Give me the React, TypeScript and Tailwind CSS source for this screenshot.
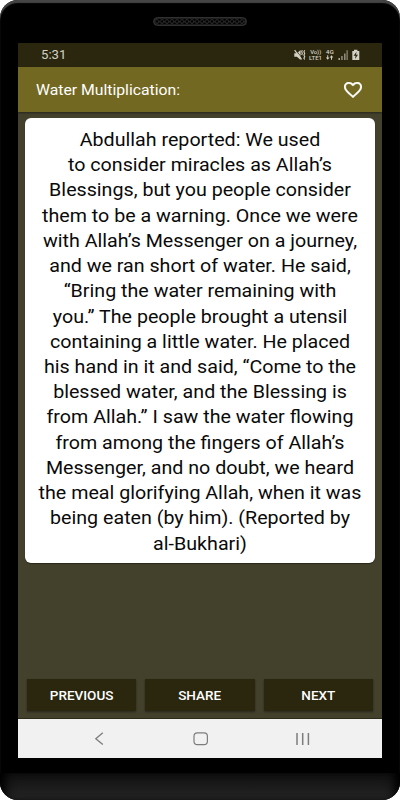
const LINES = [
  "Abdullah reported: We used",
  "to consider miracles as Allah’s",
  "Blessings, but you people consider",
  "them to be a warning. Once we were",
  "with Allah’s Messenger on a journey,",
  "and we ran short of water. He said,",
  "“Bring the water remaining with",
  "you.” The people brought a utensil",
  "containing a little water. He placed",
  "his hand in it and said, “Come to the",
  "blessed water, and the Blessing is",
  "from Allah.” I saw the water flowing",
  "from among the fingers of Allah’s",
  "Messenger, and no doubt, we heard",
  "the meal glorifying Allah, when it was",
  "being eaten (by him). (Reported by",
  "al-Bukhari)",
];

const ACTIONS = ["PREVIOUS", "SHARE", "NEXT"];

function Speaker() {
  return (
    <svg width="94" height="9" viewBox="0 0 94 9">
      <defs>
        <pattern id="mesh" width="5" height="4" patternUnits="userSpaceOnUse">
          <circle cx="1.5" cy="2.6" r="1.2" fill="#000" />
          <circle cx="4" cy="4.4" r="1.2" fill="#000" />
          <circle cx="4" cy="0.4" r="1.2" fill="#000" />
        </pattern>
      </defs>
      <rect x="0.5" y="0.5" width="93" height="8" rx="4" fill="#242424" />
      <rect x="2" y="1.5" width="90" height="6" rx="3" fill="url(#mesh)" />
      <rect x="0.5" y="0.5" width="93" height="8" rx="4" fill="none" stroke="#303030" />
    </svg>
  );
}

function StatusIcons() {
  return (
    <svg
      width="66"
      height="12"
      viewBox="0 0 66 12"
      fill="#d3d1c5"
      fontFamily="Roboto, sans-serif"
      fontWeight="500"
    >
      {/* muted speaker with vibration */}
      <path d="M0.3 4.2h2.6L6.6 1v10L2.9 7.8H0.3z" />
      <path d="M1.8 1l6.6 8.6" stroke="#2b260e" strokeWidth="0.8" />
      <path d="M0.6 1.2l7 9.2" stroke="#d3d1c5" strokeWidth="1.2" />
      <path
        d="M8.3 1.2l-.6 1.6.6 1.6-.6 1.6M10.7 1.2l-.8 1.6.8 1.6-.8 1.6.8 1.6-.8 1.6.8 1.4"
        fill="none"
        stroke="#d3d1c5"
        strokeWidth="1.1"
      />
      <text x="16.2" y="5.2" fontSize="6" textLength="11" lengthAdjust="spacingAndGlyphs">Vo))</text>
      <text x="15" y="11" fontSize="6.2" textLength="13" lengthAdjust="spacingAndGlyphs">LTE1</text>
      <text x="31.8" y="5.2" fontSize="6.2" textLength="8" lengthAdjust="spacingAndGlyphs">4G</text>
      <path d="M33.2 6.2h1v2.4h1.3l-1.8 2.2-1.8-2.2h1.3zM37 10.8h1V8.4h1.3l-1.8-2.2-1.8 2.2H37z" />
      {/* signal */}
      <path d="M44.5 9h1.4v2h-1.4zM47.4 7h1.1v4h-1.1zM50.3 4.4h1.1v6.6h-1.1z" fill="#b9b6a8" />
      <path d="M52.6 1.2h1v9.8h-1z" fill="#a5a290" />
      {/* battery */}
      <path d="M60 0.8h3.4v1.2h1.9V11h-7V2H60z" />
      <path d="M62.6 2.8l-3 4h2l-.6 3.2 3-4.2h-2z" fill="#2b260e" />
    </svg>
  );
}

function HeartIcon() {
  return (
    <svg
      width="18"
      height="16"
      viewBox="2 3 20 18.35"
      preserveAspectRatio="none"
      fill="#fff"
      stroke="#fff"
      strokeWidth="0.3"
    >
      <path d="M16.5 3c-1.74 0-3.41.81-4.5 2.09C10.91 3.81 9.24 3 7.5 3 4.42 3 2 5.42 2 8.5c0 3.78 3.4 6.86 8.55 11.54L12 21.35l1.45-1.32C18.6 15.36 22 12.28 22 8.5 22 5.42 19.58 3 16.5 3zm-4.4 15.55l-.1.1-.1-.1C7.14 14.24 4 11.39 4 8.5 4 6.5 5.5 5 7.5 5c1.54 0 3.04.99 3.57 2.36h1.87C13.46 5.99 14.96 5 16.5 5c2 0 3.5 1.5 3.5 3.5 0 2.89-3.14 5.74-7.9 10.05z" />
    </svg>
  );
}

function NavBar() {
  return (
    <div className="flex h-[39px] justify-center bg-[#f1f1f1] pt-[12px]">
      <svg width="220" height="15" viewBox="0 0 220 15" fill="none" stroke="#7d7d7d">
        <path d="M12.8 1.8L5.8 7.7l7 5.9" strokeWidth="1.3" />
        <rect x="104" y="1.8" width="13.4" height="11.8" rx="3.4" strokeWidth="1.2" />
        <path d="M207 2v12M212.7 2v12M218.4 2v12" strokeWidth="1.5" />
      </svg>
    </div>
  );
}

export default function App() {
  return (
    <div className="h-[800px] w-[400px] bg-white font-['Roboto',sans-serif]">
      <div className="flex h-full flex-col overflow-hidden rounded-[18px] bg-black shadow-[inset_0_3px_1px_#454545]">
        <div className="flex h-[43px] shrink-0 justify-center pt-[17px]">
          <Speaker />
        </div>

        {/* Screen */}
        <div className="mx-[18px] flex h-[715px] shrink-0 flex-col bg-[#43402c]">
          <div className="flex h-[24px] shrink-0 items-center justify-between bg-[#2b260e] pr-[22px] pl-[23px]">
            <span className="origin-left scale-x-[1.1] text-[12px] text-[#d3d1c5]">5:31</span>
            <StatusIcons />
          </div>
          <header className="flex h-[45px] shrink-0 items-center justify-between bg-[#736821] pr-[20px] pl-[18px] shadow-[0_1px_2px_rgba(0,0,0,0.4)]">
            <h1 className="origin-left scale-x-[1.125] pt-[2px] text-[14px] text-white">
              Water Multiplication:
            </h1>
            <HeartIcon />
          </header>

          <main className="mx-[7px] mt-[6px] h-[444.5px] shrink-0 rounded-[6px] bg-white pt-[9px] text-center shadow-[0_1px_1px_rgba(0,0,0,0.4)]">
            {LINES.map((line) => (
              <p
                key={line}
                className="h-[25.23px] scale-x-[1.092] text-[18px] leading-[25.23px] whitespace-nowrap text-[#0a0a0a]"
              >
                {line}
              </p>
            ))}
          </main>

          <div className="mt-auto flex gap-[9px] border-b border-[#2d2a17] px-[9px] pb-[7px]">
            {ACTIONS.map((label) => (
              <button
                key={label}
                className="h-[32px] flex-1 bg-[#2b260e] pt-px text-[13px] font-medium text-white shadow-[0_1px_2px_rgba(0,0,0,0.4)]"
              >
                <span className="inline-block scale-x-[1.04]">{label}</span>
              </button>
            ))}
          </div>
          <NavBar />
        </div>

        <div className="mt-[15px] flex-1 bg-linear-to-b from-[#101010] to-[#262626] shadow-[inset_10px_0_10px_-4px_#000,inset_-10px_0_10px_-4px_#000]" />
      </div>
    </div>
  );
}
